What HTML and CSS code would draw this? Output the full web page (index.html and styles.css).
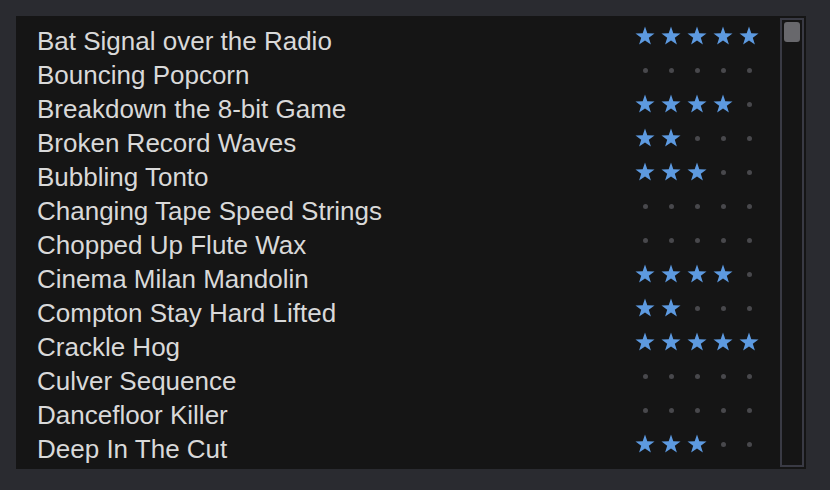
FILE: index.html
```html
<!DOCTYPE html>
<html>
<head>
<meta charset="utf-8">
<link rel="stylesheet" href="styles.css">
</head>
<body>
<svg width="0" height="0" class="defs">
  <defs>
    <symbol id="star" viewBox="0 0 20 20">
      <path d="M10 0.6 L12.3 7.3 L19.5 7.4 L13.8 11.7 L15.9 18.6 L10 14.5 L4.1 18.6 L6.2 11.7 L0.5 7.4 L7.7 7.3 Z"/>
    </symbol>
  </defs>
</svg>
<div class="panel">
  <div class="list" id="list"></div>
  <div class="track"><div class="thumb"></div></div>
</div>
<script src="app.js"></script>
</body>
</html>
```
FILE: app.js
```js
const rows = [
  ["Bat Signal over the Radio", 5],
  ["Bouncing Popcorn", 0],
  ["Breakdown the 8-bit Game", 4],
  ["Broken Record Waves", 2],
  ["Bubbling Tonto", 3],
  ["Changing Tape Speed Strings", 0],
  ["Chopped Up Flute Wax", 0],
  ["Cinema Milan Mandolin", 4],
  ["Compton Stay Hard Lifted", 2],
  ["Crackle Hog", 5],
  ["Culver Sequence", 0],
  ["Dancefloor Killer", 0],
  ["Deep In The Cut", 3]
];
const list = document.getElementById("list");
for (const [name, n] of rows) {
  const row = document.createElement("div");
  row.className = "row";
  const t = document.createElement("span");
  t.className = "title";
  t.textContent = name;
  row.appendChild(t);
  const r = document.createElement("span");
  r.className = "rating";
  for (let i = 0; i < 5; i++) {
    const c = document.createElement("span");
    c.className = "cell";
    if (i < n) {
      c.innerHTML = '<svg class="star" width="20" height="20"><use href="#star"/></svg>';
    } else {
      c.innerHTML = '<span class="dot"></span>';
    }
    r.appendChild(c);
  }
  row.appendChild(r);
  list.appendChild(row);
}
```
FILE: styles.css
```css
html, body {
  margin: 0;
  background: #2a2b30;
}
body {
  padding: 16px;
  width: 830px;
  height: 490px;
  box-sizing: border-box;
  font-family: "Liberation Sans", Arial, sans-serif;
}
.defs {
  position: absolute;
}
.panel {
  display: flex;
  width: 790px;
  height: 453px;
  background: #151515;
  padding: 2px;
  box-sizing: border-box;
}
.list {
  flex: 1;
  padding: 6px 18px 0 19px;
}
.row {
  height: 34px;
  display: flex;
  align-items: flex-start;
  justify-content: space-between;
}
.title {
  color: #d9d9d9;
  font-size: 26px;
  line-height: 34px;
  white-space: nowrap;
}
.rating {
  display: flex;
  margin-top: 2px;
}
.cell {
  width: 26px;
  height: 20px;
  display: flex;
  align-items: center;
  justify-content: center;
}
.star {
  fill: #5d9ae0;
  display: block;
}
.dot {
  width: 5px;
  height: 5px;
  border-radius: 50%;
  background: #48484c;
}
.track {
  width: 24px;
  border: 2px solid #393a44;
  box-sizing: border-box;
  padding: 2px;
}
.thumb {
  width: 16px;
  height: 20px;
  background: #68686c;
  border-radius: 3px;
}
```
